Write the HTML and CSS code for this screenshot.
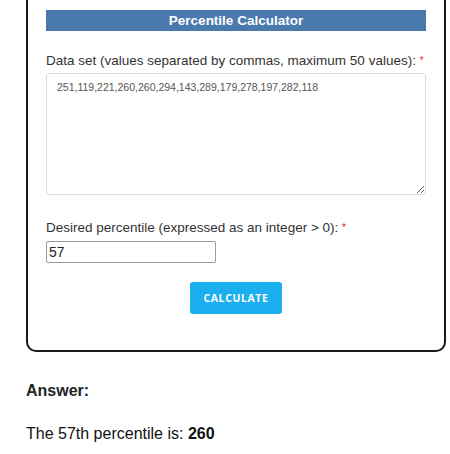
FILE: index.html
```html
<!DOCTYPE html>
<html lang="en">

<head>
	<meta charset="UTF-8">
	<meta name="viewport" content="width=device-width, initial-scale=1.0">
	<title>Percentile Calculator</title>
	<link rel="stylesheet" href="styles.css">
</head>

<body>
	<div class="calc-card">
		<h1 class="calc-title">Percentile Calculator</h1>

		<div class="field">
			<label for="dataSet">Data set (values separated by commas, maximum 50 values): <span class="req">*</span></label>
			<textarea id="dataSet">251,119,221,260,260,294,143,289,179,278,197,282,118</textarea>
		</div>

		<div class="field">
			<label for="percentile">Desired percentile (expressed as an integer &gt; 0): <span class="req">*</span></label>
			<input type="text" id="percentile" value="57">
		</div>

		<div class="actions">
			<button class="calc-button" type="button">Calculate</button>
		</div>
	</div>

	<h2 class="answer-title">Answer:</h2>
	<p class="answer-text">The 57th percentile is: <b>260</b></p>
</body>

</html>
```

FILE: styles.css
```css
*,
*::before,
*::after {
	box-sizing: border-box;
}

body {
	margin: 0;
	padding: 0 4px 0 26px;
	font-family: "Liberation Sans", Arial, sans-serif;
	color: #222;
	background-color: #fff;
}

.calc-card {
	margin-top: -10px;
	border: 2px solid #1a1a1a;
	border-radius: 10px;
	padding: 18px 18px 36px;
}

.calc-title {
	margin: 0;
	height: 21px;
	line-height: 21px;
	background-color: #4a79ad;
	color: #fff;
	font-size: 13.5px;
	font-weight: bold;
	text-align: center;
}

.field {
	margin-top: 20px;
}

.field + .field {
	margin-top: 23px;
}

.field label {
	display: block;
	font-size: 13.5px;
	color: #333;
	line-height: 20px;
	margin-bottom: 2px;
	white-space: nowrap;
}

.req {
	color: #e02424;
	font-size: 10px;
	vertical-align: top;
}

.field textarea {
	display: block;
	width: 100%;
	height: 122px;
	padding: 7px 10px;
	border: 1px solid #ddd;
	border-radius: 3px;
	font-family: "Liberation Sans", Arial, sans-serif;
	font-size: 10.5px;
	color: #555;
	resize: vertical;
}

.field input[type="text"] {
	display: block;
	width: 170px;
	height: 22px;
	margin-top: 3px;
	padding: 1px 2px;
	border: 1px solid #999;
	border-radius: 2px;
	font-family: "Liberation Sans", Arial, sans-serif;
	font-size: 14px;
	color: #222;
}

.actions {
	display: flex;
	justify-content: center;
	margin-top: 19px;
}

.calc-button {
	width: 92px;
	height: 32px;
	border: none;
	border-radius: 3px;
	background-color: #1caff0;
	color: #fff;
	font-family: "Open Sans", "Liberation Sans", sans-serif;
	font-size: 10.5px;
	font-weight: bold;
	letter-spacing: 0.6px;
	text-transform: uppercase;
	cursor: pointer;
}

.answer-title {
	margin: 29px 0 0;
	font-size: 16px;
	font-weight: bold;
	line-height: 20px;
	color: #222;
}

.answer-text {
	margin: 23px 0 0;
	font-size: 16px;
	line-height: 20px;
	color: #111;
}
```
